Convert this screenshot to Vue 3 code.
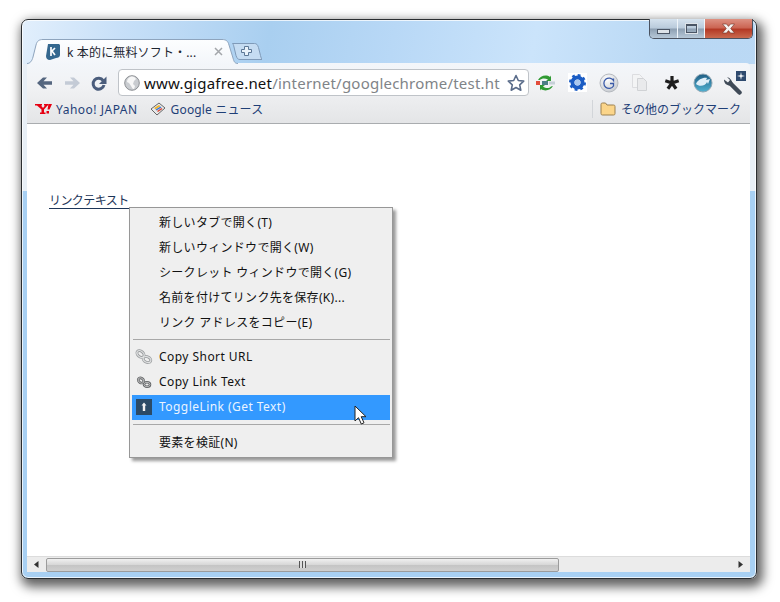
<script setup>
const menuTop = ['新しいタブで開く(T)','新しいウィンドウで開く(W)','シークレット ウィンドウで開く(G)','名前を付けてリンク先を保存(K)...','リンク アドレスをコピー(E)']
</script>

<template>
  <div class="stage">
  <div class="window">
    <div class="caption">
      <div class="winbtns">
        <div class="wb min"><i></i></div>
        <div class="wb max"><i></i></div>
        <div class="wb close">
          <svg width="15" height="11" viewBox="0 0 15 11"><path d="M1.500 1h4l2 2.400 2-2.400h4L9.700 5.500 13.500 10h-4l-2-2.400-2 2.400h-4l3.800-4.500z" fill="#f6f2f0" stroke="#6b3024" stroke-width=".6"/></svg>
        </div>
      </div>
      <div class="tabs">
        <div class="tab">
          <svg class="tabshape" width="211" height="25" viewBox="0 0 211 25"><defs><linearGradient id="tf" x1="0" y1="0" x2="0" y2="1"><stop offset="0" stop-color="#fdfeff"/><stop offset="1" stop-color="#f3f6fa"/></linearGradient></defs><path d="M0 24.500C3 24.500 5 22 6 18L9 6C10 2 12 .5 16 .5H195C199 .5 201 2 202 6L206 19C207 23 208 24.500 211 24.500" fill="url(#tf)" stroke="#8ea4bd"/></svg>
          <svg class="fav" width="16" height="16" viewBox="0 0 16 16"><path d="M3 0h11l1 1v10c0 2-2 3-4 3l-6 2c-3 0-4-2-4-4z" fill="#35688f"/><path d="M6 3v9M6 8l4-4M7 7l3 4" stroke="#fff" stroke-width="1.700" fill="none"/></svg>
          <span class="tabtitle">k 本的に無料ソフト・...</span>
          <svg class="tabx" width="9" height="9" viewBox="0 0 9 9"><path d="M1 1l7 7M8 1L1 8" stroke="#a3a6aa" stroke-width="1.500"/></svg>
        </div>
        <div class="newtab">
          <svg width="30" height="17" viewBox="0 0 30 17"><path d="M.5.500h22c2 0 3 1 4 4l2 8c.5 2 1 4 2 4H8c-2 0-3-1-4-4L2 4C1.500 2 1 .5.500.500z" fill="#c5dcf2" stroke="#7f9ab8"/><path d="M12 5h4v3h3v3h-3v3h-4v-3H9V8h3z" transform="translate(.5 -1.500)" fill="#eaf3fb" stroke="#5d7896"/></svg>
        </div>
      </div>
    </div>

    <div class="chrome">
      <div class="toolbar">
        <div class="navs">
          <svg width="18" height="18" viewBox="0 0 18 18"><path d="M16 7.200v3.600H7.500l3.500 3.700H7L1 9l6-5.500h4L7.500 7.200z" fill="#55667f"/></svg>
          <svg width="18" height="18" viewBox="0 0 18 18"><path d="M2 7.200v3.600h8.500L7 14.500h4L17 9l-6-5.500H7l3.500 3.700z" fill="#c4cbd6"/></svg>
          <svg width="18" height="18" viewBox="0 0 18 18"><path d="M13.200 6.600A5.500 5.500 0 1 0 14 11" fill="none" stroke="#4b5d7c" stroke-width="3"/><path d="M16.500 2.500v7.500H9z" fill="#4b5d7c"/></svg>
        </div>
        <div class="omnibox">
          <svg class="globe" width="16" height="16" viewBox="0 0 16 16"><circle cx="8" cy="8" r="7.300" fill="#c9ccd0" stroke="#8d9094"/><path d="M6 2c3-1 5 0 6 2l-2 2-1 3 2 2-1 3c-2 0-2-2-3-3L5 8 3 7c0-2 1-4 3-5z" fill="#f7f7f7"/></svg>
          <div class="url"><span class="host">www.gigafree.net</span><span class="path">/internet/googlechrome/test.ht</span></div>
          <svg class="star" width="18" height="18" viewBox="0 0 18 18"><path d="M9 1.500l2.300 5 5.400.6-4 3.700 1.100 5.400L9 13.500 4.200 16.200l1.100-5.400-4-3.700 5.400-.6z" fill="#fff" stroke="#5a6c8a" stroke-width="1.600" stroke-linejoin="round"/></svg>
        </div>
        <div class="exts">
          <svg width="21" height="20" viewBox="0 0 21 20"><path d="M3 7c2-4 8-6 12-3l1-1.500V8h-5l2-1.500C10 5 7 5 5 7zM18 13c-2 4-8 6-12 3l-1 1.500V12h5l-2 1.500c3 2 6 2 8 0z" fill="#2f9a33"/><rect x="1" y="8" width="4" height="4" fill="#e24b3b"/><rect x="7" y="8" width="6" height="4" fill="#4c7e86"/><rect x="14" y="8.500" width="6" height="3" fill="#c6d0d8"/></svg>
          <div class="gear"><svg width="19" height="19" viewBox="0 0 19 19"><circle cx="9.500" cy="9.500" r="5" fill="none" stroke="#1a5cc4" stroke-width="4"/><circle cx="9.500" cy="9.500" r="7.300" fill="none" stroke="#1a5cc4" stroke-width="2.400" stroke-dasharray="2.800 2.930"/><circle cx="9.500" cy="9.500" r="3" fill="#a9c8ef"/></svg></div>
          <svg width="20" height="20" viewBox="0 0 20 20"><defs><radialGradient id="gb" cx=".4" cy=".3" r=".8"><stop offset="0" stop-color="#fff"/><stop offset="1" stop-color="#c2c6cc"/></radialGradient></defs><circle cx="10" cy="10" r="9" fill="url(#gb)" stroke="#b5b9bf"/><path d="M14.500 5.500V7.500A5.200 5.200 0 1 0 14.500 13V10.500H11" fill="none" stroke="#3a5aa8" stroke-width="1.300"/></svg>
          <svg width="18" height="20" viewBox="0 0 18 20"><path d="M1.500 1.500h7l3 3v10h-10z" fill="#f3f4f5" stroke="#dcdde0"/><path d="M6.500 5.500h6l3 3v9h-9z" fill="#e9eaec" stroke="#d0d2d5"/></svg>
          <svg width="16" height="16" viewBox="0 0 16 16"><g stroke="#1e1e1e" stroke-width="3.200"><path d="M8 8V1M8 8l6.700-2.200M8 8l4.100 5.700M8 8l-4.100 5.700M8 8L1.300 5.800"/></g></svg>
          <svg width="20" height="20" viewBox="0 0 20 20"><defs><linearGradient id="bb" x1="0" y1="0" x2="0" y2="1"><stop offset="0" stop-color="#1f5d83"/><stop offset="1" stop-color="#52b2d2"/></linearGradient></defs><circle cx="10" cy="10" r="9" fill="url(#bb)" stroke="#8fa6b4"/><path d="M3 11c2-5 8-7 11-6l-1 2 4-1-2 5-1-2c-1 4-8 5-11 2z" fill="#e0eef8"/></svg>
          <div class="wrench">
            <svg width="20" height="20" viewBox="0 0 20 20"><path d="M7.500 8.500L16.500 17.500" stroke="#3f4a57" stroke-width="4.500" stroke-linecap="round"/><path d="M1 4.500c0 5 4 7 9 5.500-.5-4-2.500-7-6-8L7 5 5 7.500z" fill="#3f4a57"/></svg>
            <div class="badge"><svg width="10" height="10" viewBox="0 0 10 10"><path d="M5 1L5.700 4.300 9 5 5.700 5.700 5 9 4.300 5.700 1 5 4.300 4.300z" fill="#fff"/></svg></div>
          </div>
        </div>
      </div>
      <div class="bookmarks">
        <div class="bm yj">
          <svg width="17" height="10" viewBox="0 0 17 10"><path d="M0 0h7v1.500H6l2 2.500 2-2.500H9V0h4.500v1.500h-1L9 5.500v3h1.500V10H5V8.500h1.500v-3L2 1.500H0z" fill="#e60012"/><path d="M13.500 0H17l-2.500 5.500h-2zM11.500 7h2.500v2.500h-2.500z" fill="#e60012"/></svg>
          <span>Yahoo! JAPAN</span>
        </div>
        <div class="bm gn">
          <svg width="16" height="16" viewBox="0 0 16 16"><path d="M1 8l8-6 6 5-8 7z" fill="#e8e8e8" stroke="#666"/><path d="M4 7l5-3 1.500 1.200-5 3z" fill="#f0b429"/><path d="M5.500 8.500l5-3 1 1-5 3z" fill="#3d7ad6"/><path d="M7 10l4.500-3 1 1-4.500 3z" fill="#d94b3a"/></svg>
          <span>Google ニュース</span>
        </div>
        <div class="spacer"></div>
        <div class="sep"></div>
        <div class="bm other">
          <svg width="16" height="14" viewBox="0 0 16 14"><path d="M1 2.500C1 1.500 1.500 1 2.500 1h3l1.500 2h6.500c1 0 1.500.5 1.500 1.500v7c0 1-.5 1.500-1.500 1.500h-11C1.500 13 1 12.500 1 11.500z" fill="#fbd58a" stroke="#9b8050"/></svg>
          <span>その他のブックマーク</span>
        </div>
      </div>
    </div>

    <div class="page">
      <a class="link">リンクテキスト</a>
      <div class="menu">
        <div v-for="t in menuTop" :key="t" class="mi">{{ t }}</div>
        <div class="msep"></div>
        <div class="mi latin">
          <svg class="micon" width="18" height="16" viewBox="0 0 18 16"><g fill="none"><ellipse cx="5.500" cy="5" rx="4" ry="2.800" transform="rotate(40 5.500 5)" stroke="#999c9e" stroke-width="2.800"/><ellipse cx="12" cy="10.500" rx="4" ry="2.800" transform="rotate(25 12 10.500)" stroke="#999c9e" stroke-width="2.800"/><ellipse cx="5.500" cy="5" rx="4" ry="2.800" transform="rotate(40 5.500 5)" stroke="#dfe0e1" stroke-width="1.200"/><ellipse cx="12" cy="10.500" rx="4" ry="2.800" transform="rotate(25 12 10.500)" stroke="#dfe0e1" stroke-width="1.200"/></g></svg>
          Copy Short URL
        </div>
        <div class="mi latin">
          <svg class="micon" width="18" height="16" viewBox="0 0 18 16"><g fill="none"><ellipse cx="6" cy="6.500" rx="3" ry="2.300" transform="rotate(35 6 6.500)" stroke="#626466" stroke-width="2.600"/><ellipse cx="12" cy="10.500" rx="3" ry="2.200" stroke="#626466" stroke-width="2.600"/><ellipse cx="6" cy="6.500" rx="3" ry="2.300" transform="rotate(35 6 6.500)" stroke="#b8b9ba" stroke-width="1"/><ellipse cx="12" cy="10.500" rx="3" ry="2.200" stroke="#b8b9ba" stroke-width="1"/></g></svg>
          Copy Link Text
        </div>
        <div class="mi latin hl">
          <div class="tl"><svg width="16" height="16" viewBox="0 0 16 16"><path d="M8 3.500l2.500 3H9.200V12H6.800V6.500H5.500z" fill="#f2f2f2"/></svg></div>
          ToggleLink (Get Text)
          <svg class="cursor" width="15" height="21" viewBox="0 0 15 21"><path d="M1 1v15l3.500-3.300 2.800 6.300 2.700-1.200-2.800-6.100H12z" fill="#fff" stroke="#222"/></svg>
        </div>
        <div class="msep"></div>
        <div class="mi">要素を検証(N)</div>
      </div>
    </div>

    <div class="hscroll">
      <div class="arrow"><svg width="5" height="7" viewBox="0 0 5 7"><path d="M4.500 0v7L0 3.500z" fill="#333"/></svg></div>
      <div class="track">
        <div class="thumb"><span class="grip"></span></div>
      </div>
      <div class="arrow"><svg width="5" height="7" viewBox="0 0 5 7"><path d="M.5 0v7L5 3.500z" fill="#333"/></svg></div>
    </div>
  </div>
  </div>
</template>

<style>
html, body { margin: 0; background: #fff; }
</style>

<style scoped>
.stage {
  box-sizing: border-box;
  width: 780px;
  height: 602px;
  padding: 19px 0 0 21px;
  overflow: hidden;
}
.window {
  position: relative;
  box-sizing: border-box;
  width: 736px;
  height: 560px;
  padding: 0 6px 6px 5px;
  display: flex;
  flex-direction: column;
  border: 1px solid #2a2d30;
  border-radius: 7px;
  background:
    linear-gradient(180deg, transparent 44px, #e8eff6 44px, #e8eff6 171px, #a8d0f3 171px),
    linear-gradient(100deg, #e2effc 0, #c8e0f8 12%, #a9cff0 30%, #b8d8f6 45%, #cbe4fb 62%, #b9d8f4 78%, #bcd9f5 100%);
  box-shadow: 3px 5px 11px 3px rgba(0,0,0,.62), inset 0 0 0 1px rgba(255,255,255,.75);
  font-family: "Noto Sans", "Noto Sans CJK JP", sans-serif;
  font-size: 12px;
}
.caption { position: relative; height: 43px; flex: none; }
.winbtns {
  position: absolute;
  right: -3px;
  top: -1px;
  display: flex;
  height: 20px;
  border: 1px solid #4a5260;
  border-top: none;
  border-radius: 0 0 5px 5px;
  overflow: hidden;
  box-sizing: border-box;
}
.wb { display: flex; align-items: center; justify-content: center; box-sizing: border-box; }
.min, .max { background: linear-gradient(#d5e2ee 0, #b9cadb 48%, #8d9fb2 52%, #b7c8d8 100%); border-right: 1px solid #f0f5fa; }
.min { width: 28px; }
.max { width: 27px; }
.min i { display: block; width: 11px; height: 3px; margin-top: 5px; background: #dde3e9; border: 1px solid #4a5565; }
.max i { display: block; width: 9px; height: 6px; border: 1px solid #4a5565; border-top-width: 2px; outline: 1px solid #dde3e9; }
.close { width: 47px; background: linear-gradient(#dd9182 0, #cc6654 45%, #b43a26 55%, #c96a4f 100%); }
.tabs { position: absolute; left: 0; bottom: -1px; display: flex; align-items: flex-end; }
.tab {
  position: relative;
  width: 211px;
  height: 25px;
  box-sizing: border-box;
  display: flex;
  align-items: center;
  padding: 0 0 0 18px;
}
.tabshape { position: absolute; left: 0; top: 0; }
.fav { position: relative; flex: none; }
.tabtitle { position: relative; margin-left: 6px; width: 145px; flex: none; white-space: nowrap; overflow: hidden; color: #1d2530; font-size: 12px; letter-spacing: .15px; }
.tabx { position: relative; flex: none; margin-left: 2px; }
.newtab { margin: 0 0 4px -6px; height: 17px; }
.newtab svg { display: block; }
.chrome {
  flex: none;
  height: 61px;
  box-sizing: border-box;
  border-bottom: 1px solid #a9acaf;
  background: linear-gradient(#f3f6fa 0, #f1f2f4 38%, #e4e5e7 100%);
  border-radius: 4px 4px 0 0;
}
.toolbar { height: 38px; display: flex; align-items: center; padding: 1px 0 0 9px; box-sizing: border-box; }
.navs { display: flex; gap: 9px; width: 82px; flex: none; }
.omnibox {
  box-sizing: border-box;
  width: 411px;
  height: 27px;
  flex: none;
  display: flex;
  align-items: center;
  background: #fff;
  border: 1px solid #bfc3c8;
  border-radius: 4px;
  padding: 0 3px 0 5px;
}
.globe { flex: none; }
.url { margin-left: 4px; flex: 1; min-width: 0; white-space: nowrap; font-size: 15px; letter-spacing: .22px; }
.host { color: #111; }
.path { color: #808488; }
.star { flex: none; margin-left: 3px; }
.exts { display: grid; grid-template-columns: repeat(7, 31.5px); align-items: center; justify-items: center; padding-left: 1px; }
.gear { width: 19px; height: 19px; background: #fff; }
.gear svg { display: block; }
.wrench { position: relative; width: 23px; height: 22px; }
.wrench > svg { position: absolute; left: 0; top: 3px; }
.badge { position: absolute; right: 0; top: -1px; width: 10px; height: 10px; background: #2f4a6e; }
.badge svg { display: block; }
.bookmarks { height: 22px; display: flex; align-items: center; padding: 0 9px 6px 8px; box-sizing: border-box; color: #1f3f77; }
.bm { display: flex; align-items: center; gap: 5px; white-space: nowrap; }
.yj span { letter-spacing: .5px; }
.yj { gap: 4px; }
.gn { margin-left: 12px; }
.gn span { letter-spacing: .15px; }
.spacer { flex: 1; }
.sep { width: 1px; height: 18px; background: #d2d5d9; margin-right: 7px; }
.page { position: relative; flex: 1; background: #fff; padding-top: 68px; min-height: 0; }
.link { display: inline-block; margin-left: 22px; color: #1d3558; font-size: 12px; line-height: 17px; border-bottom: 1px solid #1d3558; height: 16px; white-space: nowrap; letter-spacing: -.58px; }
.menu {
  position: absolute;
  left: 102px;
  top: 83px;
  width: 264px;
  height: 251px;
  box-sizing: border-box;
  padding: 2px 2px 0;
  background: #efefef;
  border: 1px solid #979797;
  box-shadow: 3px 3px 3px rgba(0,0,0,.4);
  color: #111;
}
.mi {
  position: relative;
  box-sizing: border-box;
  height: 25px;
  display: flex;
  align-items: center;
  padding: 0 0 2px 27px;
  white-space: nowrap;
  font-size: 12px;
  letter-spacing: .3px;
}
.latin { letter-spacing: .45px; }
.msep { height: 1px; background: #a8a8a8; margin: 4px 0 5px 1px; }
.micon { position: absolute; left: 3px; top: 4px; }
.hl { background: #3399ff; color: #eaf4ff; }
.tl { position: absolute; left: 4px; top: 4px; width: 16px; height: 16px; background: #2b4a66; }
.tl svg { display: block; }
.cursor { position: absolute; left: 222px; top: 10px; z-index: 2; }
.hscroll { flex: none; height: 16px; display: flex; background: #ececec; border-top: 1px solid #dcdcdc; box-sizing: border-box; }
.arrow { width: 19px; flex: none; display: flex; align-items: center; justify-content: center; }
.track { flex: 1; display: flex; align-items: center; }
.thumb {
  width: 513px;
  height: 14px;
  box-sizing: border-box;
  border: 1px solid #9c9c9c;
  border-radius: 2px;
  background: linear-gradient(#f0f0f0, #d6d6d6 50%, #c4c4c4 51%, #cfcfcf);
  display: flex;
  align-items: center;
  justify-content: center;
}
.grip { display: block; width: 7px; height: 7px; background: repeating-linear-gradient(90deg, #555 0 1px, #ddd 1px 3px); }
</style>
